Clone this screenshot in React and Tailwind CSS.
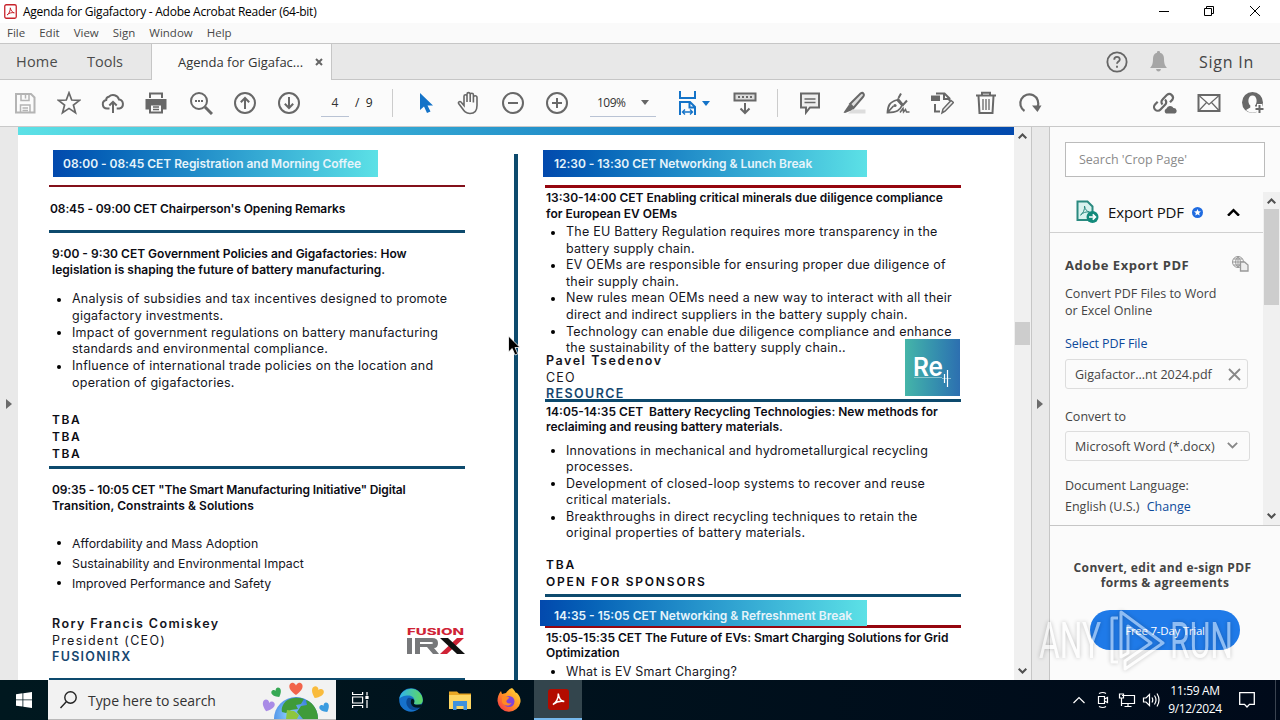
import { clsx } from "clsx";

const Icon = ({ size = 24, className, children }) => (
  <svg
    width={size}
    height={size}
    viewBox="0 0 24 24"
    fill="none"
    stroke="currentColor"
    strokeWidth="2"
    className={clsx("shrink-0", className)}
  >
    {children}
  </svg>
);

const SaveIcon = () => (
  <Icon className="text-[#b4b4b4]">
    <path d="M3 3h15l3.5 3.5v15H3z" />
    <path d="M8 3v6.5h8V3M12.500 4v3.500M7.500 21v-7h9.500v7M9.500 17h5.500M9.500 19.500h5.500" strokeWidth="1.5" />
  </Icon>
);

const StarIcon = () => (
  <Icon>
    <path d="M12 1.800l2.700 7.200 7.800.3-6.100 4.800 2.100 7.600L12 17.400l-6.500 4.300 2.100-7.600L1.500 9.300l7.800-.3z" strokeWidth="1.7" />
  </Icon>
);

const CloudUpIcon = () => (
  <Icon>
    <path d="M8.500 17.500H6a4.300 4.300 0 0 1-.8-8.500 3.200 3.200 0 0 1 2.600-3.300A6.200 6.200 0 0 1 18 8.500a4.600 4.600 0 0 1 .5 9h-2.800" />
    <path d="M12 22V11M8.300 14.500L12 10.800l3.700 3.700" />
  </Icon>
);

const PrinterIcon = () => (
  <Icon className="mr-[2px]">
    <path d="M6 7V2.500h12V7" />
    <path d="M1.500 8h21v10.500H19V14H5v4.500H1.500z" fill="currentColor" stroke="none" />
    <path d="M6 13.500v8h12v-8z" fill="#fbfbfb" />
    <path d="M9 16h6M9 18.500h6" strokeWidth="1.3" />
  </Icon>
);

const SearchDotsIcon = () => (
  <Icon>
    <circle cx="10" cy="10" r="8" />
    <path d="M16 16l7 7" strokeWidth="3" />
    <path d="M6 10h2M9 10h2M12 10h2" />
  </Icon>
);

const CircleIcon = ({ d }) => (
  <Icon>
    <circle cx="12" cy="12" r="10" />
    <path d={d} />
  </Icon>
);

const HandIcon = () => (
  <Icon>
    <path
      d="M7 14.500V5.200a1.500 1.500 0 0 1 3 0V11 3.200a1.500 1.500 0 0 1 3.200 0V11 3.800a1.500 1.500 0 0 1 3.200 0V11.500 6.500a1.600 1.600 0 0 1 3.600 0v8c0 5-2.600 8-7 8-4.500 0-6-2.500-8-5.500l-3.200-4.300c-1-1.500.8-2.900 2.200-1.700z"
      strokeWidth="1.6"
    />
  </Icon>
);

const FitIcon = () => (
  <Icon className="text-[#1473c8]">
    <path d="M4 0v7h15V0" />
    <path d="M4 24V11h10l5 5v8M13.500 11v5.500H19" />
    <path d="M6.500 21h10M9 18.500L6.500 21 9 23.500M14 18.500l2.500 2.500-2.500 2.500" strokeWidth="1.4" />
  </Icon>
);

const KeyboardIcon = () => (
  <Icon>
    <path d="M1.500 2.500h21v7h-21z" fill="#ddd" />
    <path d="M5 6h2M9 6h2M13 6h2M17 6h2" />
    <path d="M12 12v10M7.500 17.500L12 22l4.500-4.500" />
  </Icon>
);

const CommentIcon = () => (
  <Icon>
    <path d="M3 2.500h18v14h-9L8 21.500v-5H3z" fill="#eee" />
    <path d="M6.500 8h11M6.500 11.500h11" strokeWidth="1.4" />
  </Icon>
);

const HighlighterIcon = () => (
  <Icon>
    <path d="M10 18.500h13.500v4H6z" fill="#ddd" stroke="none" />
    <path d="M8 13L18.500 2.500q2-1.300 3 .2t-.6 3.300L11.500 17z" fill="#ddd" />
    <path d="M7 13.500l5 4-3.500 2.300-5.500 2.300-1.500-.6z" fill="currentColor" stroke="none" />
  </Icon>
);

const SignIcon = () => (
  <Icon>
    <path d="M1.500 21.500c.5-7 2-10.500 9.500-12.500l5 5.500c-2 4.500-5 7-14.500 7zl6-6.500" strokeWidth="1.8" />
    <path d="M11.500 7.500l5.500 6.500 4-4.500M12.500 7l2.500-4.500" />
    <circle cx="9" cy="14.500" r="1.600" fill="currentColor" stroke="none" />
    <path d="M14 21.500l3-4 .5 3.500 2-2.500 1 2.500h3" strokeWidth="1.5" />
  </Icon>
);

const EditDocIcon = () => (
  <Icon>
    <path d="M5 13v7.500h5M6 2.500h8.500l5 5V10M14 2.500V8h5" />
    <path d="M1 4.500h9v5.500H1z" fill="currentColor" stroke="none" />
    <path d="M12 22l1-4 8-8.500 2.500 2-8.500 8.700z" strokeWidth="1.500" fill="#eee" />
  </Icon>
);

const TrashIcon = () => (
  <Icon>
    <path d="M2 4.500h20M8 4V1.800h8V4M4.500 5l1 17h13l1-17" />
    <path d="M9 8v11M12 8v11M15 8v11" strokeWidth="1.3" />
  </Icon>
);

const RotateIcon = () => (
  <Icon>
    <path d="M6.500 20A9 9 0 1 1 19.500 16" strokeWidth="2.200" />
    <path d="M14 14.500h9.500L19.500 21z" fill="currentColor" stroke="none" />
  </Icon>
);

const LinkCloudIcon = () => (
  <Icon>
    <path
      d="M9.500 13.500a3.500 3.500 0 0 1 0-5l4.500-4.700a3.700 3.700 0 0 1 5.300 5l-2.300 2.500M12 8.500a3.500 3.500 0 0 1 .3 5L7.500 18.500a3.700 3.700 0 0 1-5.500-5l2.700-2.800"
      strokeWidth="2.2"
    />
    <path d="M13 22.500a2.800 2.800 0 0 1 .5-5 3.900 3.900 0 0 1 7-.5 2.900 2.900 0 0 1 1.500 5.500z" fill="currentColor" stroke="none" />
  </Icon>
);

const MailIcon = () => (
  <Icon>
    <path d="M1.500 4h21v16h-21z" />
    <path d="M2 4.500l10 9 10-9M2 19.500l7.500-8M22 19.500l-7.500-8" strokeWidth="1.2" />
  </Icon>
);

const UserPlusIcon = () => (
  <Icon>
    <circle cx="11.500" cy="11.500" r="10.500" fill="currentColor" stroke="none" />
    <path d="M11.500 4.500c-5 0-5 8-2.200 10v2L5 19c3.500 3.500 9.500 3.500 13 0l-4-2.500v-2c2.500-2 2.500-10-2.500-10z" fill="#fbfbfb" stroke="none" />
    <path d="M18.500 13v10M13.500 18h10" stroke="#fbfbfb" strokeWidth="5" />
    <path d="M18.500 14v8M14.500 18h8" />
  </Icon>
);

const Tool = ({ children }) => (
  <div className="w-11 h-full flex items-center justify-center">{children}</div>
);

const Caret = ({ className }) => (
  <svg width="8" height="5" viewBox="0 0 8 5" className={className}>
    <path d="M0 0h8L4 5z" fill="currentColor" />
  </svg>
);

const AcrobatIcon = () => (
  <svg width="13" height="15" viewBox="0 0 13 15">
    <rect x=".75" y=".75" width="11.500" height="13.500" rx="1.500" fill="#fff" stroke="#c8232c" strokeWidth="1.3" />
    <path d="M3 11c2-1 3.500-4.500 3.300-7.200C7 7 8.500 8.500 10.300 8.800 7.500 8.300 5 9 3 11z" fill="none" stroke="#c8232c" />
  </svg>
);

const TitleBar = () => (
  <div className="h-[23px] bg-white flex items-center pl-[4px] pr-[18px] shrink-0">
    <AcrobatIcon />
    <span className="ml-[6px] text-[12px] tracking-[-0.25px] text-black">
      Agenda for Gigafactory - Adobe Acrobat Reader (64-bit)
    </span>
    <svg width="103" height="12" viewBox="0 0 103 12" className="ml-auto -mt-[2px]" fill="none" stroke="#000">
      <path d="M0 6.500h10" />
      <path d="M45.500 3.500h7v7h-7zM47.500 3V1.500h7v7H53" />
      <path d="M91 1l10 10M101 1L91 11" />
    </svg>
  </div>
);

const MenuBar = () => (
  <div className="h-[20px] bg-[#fafafa] flex items-center pl-[7px] gap-[14px] text-[11.5px] text-[#484848] shrink-0">
    <span>File</span>
    <span>Edit</span>
    <span>View</span>
    <span>Sign</span>
    <span>Window</span>
    <span>Help</span>
  </div>
);

const TabBar = () => (
  <div className="h-[37px] bg-[#e8e8e8] border-y border-[#c6c6c6] flex items-stretch shrink-0 text-[#4b4b4b]">
    <span className="w-[71px] pl-4 flex items-center text-[14.5px] tracking-[0.2px]">Home</span>
    <span className="w-[80px] pl-4 flex items-center text-[14.5px]">Tools</span>
    <div className="w-[181px] h-9 bg-[#fbfbfb] border-x border-[#c6c6c6] pl-[26px] pt-px flex items-center text-[13px] text-[#333]">
      Agenda for Gigafac...
      <svg width="8" height="8" viewBox="0 0 8 8" className="ml-auto mr-2 -mt-px">
        <path d="M1 1l6 6M7 1L1 7" stroke="#666" strokeWidth="2" />
      </svg>
    </div>
    <div className="ml-auto flex items-center pr-6 text-[#666]">
      <Icon size={22}>
        <circle cx="12" cy="12" r="10.500" />
        <path d="M9 9.500c0-4 6-4 6-.3 0 2.300-3 2.300-3 4.800M12 16v2.200" />
      </Icon>
      <svg width="17" height="21" viewBox="0 0 17 21" className="ml-[22px]" fill="#a6a6a6">
        <path d="M8.500 0a1.500 1.500 0 0 1 1.500 1.800c3 .8 4 3 4 6 0 5 1 7.200 3 9.200H0c2-2 3-4.200 3-9.200 0-3 1-5.200 4-6A1.500 1.500 0 0 1 8.500 0zM6 18h5q-.5 2.500-2.500 2.500T6 18z" />
      </svg>
      <span className="ml-8 w-[57px] text-[16px] tracking-[0.75px] text-[#444]">Sign In</span>
    </div>
  </div>
);

const Toolbar = () => (
  <div className="h-[47px] bg-[#fbfbfb] border-b border-[#c9c9c9] flex items-center pl-[3px] shrink-0 text-[#686868]">
    <Tool><SaveIcon /></Tool>
    <Tool><StarIcon /></Tool>
    <Tool><CloudUpIcon /></Tool>
    <Tool><PrinterIcon /></Tool>
    <Tool><SearchDotsIcon /></Tool>
    <Tool><CircleIcon d="M12 18V7M7.800 11.200L12 7l4.200 4.200" /></Tool>
    <Tool><CircleIcon d="M12 6v11M7.800 12.800L12 17l4.200-4.200" /></Tool>
    <span className="ml-[10px] w-7 h-[27px] border-b border-[#b9c3d4] text-center text-[12px] leading-[26px] text-[#333]">4</span>
    <span className="ml-[6px] w-[37px] text-[12px] text-[#222] whitespace-pre">/  9</span>
    <div className="w-px h-7 bg-[#ccc]" />
    <div className="w-[10px]" />
    <Tool>
      <svg width="13" height="20" viewBox="0 0 13 20" fill="#1473c8" className="ml-[3px]">
        <path d="M0 0v17l4-3.500 3 6.500 3.500-1.500-3-6H13z" />
      </svg>
    </Tool>
    <Tool><HandIcon /></Tool>
    <Tool><CircleIcon d="M7 12h10" /></Tool>
    <Tool><CircleIcon d="M7 12h10M12 7v10" /></Tool>
    <div className="ml-[11px] w-[66px] h-[27px] border-b border-[#b9c3d4] pl-[7px] pr-[7px] flex items-center justify-between text-[12px] tracking-[-0.5px] text-[#333]">
      109%
      <Caret className="text-[#666]" />
    </div>
    <div className="ml-[20px] w-[34px] flex items-center">
      <FitIcon />
      <Caret className="text-[#1473c8] ml-[2px]" />
    </div>
    <div className="ml-[13px] w-11 flex justify-center"><KeyboardIcon /></div>
    <div className="ml-[10px] w-px h-7 bg-[#ccc]" />
    <div className="w-[10px]" />
    <Tool><CommentIcon /></Tool>
    <Tool><HighlighterIcon /></Tool>
    <Tool><SignIcon /></Tool>
    <Tool><EditDocIcon /></Tool>
    <Tool><TrashIcon /></Tool>
    <Tool><RotateIcon /></Tool>
    <div className="ml-auto pr-[5px] flex h-full">
      <Tool><LinkCloudIcon /></Tool>
      <Tool><MailIcon /></Tool>
      <Tool><UserPlusIcon /></Tool>
    </div>
  </div>
);

const Banner = ({ className, children }) => (
  <div
    className={clsx(
      "bg-linear-to-r from-[#0349ad] to-[#5ce1e6] flex items-center text-[12px] font-semibold text-[#e6f4fb] whitespace-nowrap shrink-0",
      className
    )}
  >
    {children}
  </div>
);

const Rule = ({ className }) => <div className={clsx("w-[416px] shrink-0", className)} />;

const Heading = ({ lines, className }) => (
  <div className={clsx("text-[12px] font-semibold text-[#0c0c14] whitespace-nowrap shrink-0", className)}>
    {lines.map((line, i) => (
      <p key={i} className="whitespace-pre">{line}</p>
    ))}
  </div>
);

const Bullets = ({ items, className }) => (
  <ul className={clsx("text-[#15151d] whitespace-nowrap shrink-0", className)}>
    {items.map((lines, i) => (
      <li key={i} className="flex">
        <span className="w-5 pl-[5px] pt-[0.45em] shrink-0">
          <span className="block size-[4px] mt-px rounded-full bg-black" />
        </span>
        <div>
          {lines.map((line, j) => (
            <p key={j}>{line}</p>
          ))}
        </div>
      </li>
    ))}
  </ul>
);

const FusionLogo = () => (
  <svg width="59" height="28" viewBox="0 0 59 28" className="shrink-0 overflow-visible">
    <text x="1" y="7.500" fontFamily="Inter, sans-serif" fontWeight="800" fontSize="9" textLength="57" lengthAdjust="spacingAndGlyphs" fill="#cf2336">
      FUSION
    </text>
    <path d="M1 11h5v16H1zM9 11h17q6 0 6 5t-4 5l5 6h-6l-6-7h-7v-3h11q2 0 2-1t-2-1H14v12H9z" fill="#77787a" />
    <path d="M51 11h7L41 27h-7z" fill="#cf2336" />
    <path d="M34 11h8l17 16h-8z" fill="#111" />
  </svg>
);

const ResourceLogo = () => (
  <div className="w-[55px] h-[57px] bg-linear-to-r from-[#45b5a8] to-[#2d6fb0] shrink-0">
    <svg width="55" height="57" viewBox="0 0 55 57" className="overflow-visible">
      <text x="8" y="37" fontFamily="Inter, sans-serif" fontWeight="600" fontSize="26" textLength="30" lengthAdjust="spacingAndGlyphs" fill="#fff">
        Re
      </text>
      <path d="M9 38.500h28M37 39.500h9" stroke="#bfe3e6" strokeWidth=".6" />
      <path d="M39.500 35v9M42.500 31v17" stroke="#fff" strokeWidth="1.2" />
    </svg>
  </div>
);

const LeftColumn = () => (
  <div className="w-[416px] flex flex-col">
    <Banner className="mt-[15px] ml-1 w-[325px] h-[27px] pl-[10px] pt-px tracking-[-0.04px]">
      08:00 - 08:45 CET Registration and Morning Coffee
    </Banner>
    <Rule className="mt-2 h-[2px] bg-[#83101a]" />
    <Heading className="mt-[14px] ml-px leading-4 tracking-[-0.1px]" lines={["08:45 - 09:00 CET Chairperson's Opening Remarks"]} />
    <Rule className="mt-[13px] h-[3px] bg-[#0d4a6d]" />
    <Heading
      className="mt-[13px] ml-[3px] leading-4"
      lines={["9:00 - 9:30 CET Government Policies and Gigafactories: How", "legislation is shaping the future of battery manufacturing."]}
    />
    <Bullets
      className="mt-[13px] ml-[3px] h-[100px] pt-[0.4px] text-[12.5px] leading-[16.67px] tracking-[0.24px]"
      items={[
        ["Analysis of subsidies and tax incentives designed to promote", "gigafactory investments."],
        ["Impact of government regulations on battery manufacturing", "standards and environmental compliance."],
        ["Influence of international trade policies on the location and", "operation of gigafactories."],
      ]}
    />
    <Heading className="mt-[20px] ml-[3px] h-[51px] leading-[17px] tracking-[1.6px]" lines={["TBA", "TBA", "TBA"]} />
    <Rule className="mt-1 h-[3px] bg-[#0d4a6d]" />
    <Heading
      className="mt-[13px] ml-[3px] leading-4 tracking-[-0.13px]"
      lines={['09:35 - 10:05 CET "The Smart Manufacturing Initiative" Digital']}
    />
    <Heading className="ml-[3px] leading-4 tracking-[0.06px]" lines={["Transition, Constraints & Solutions"]} />
    <Bullets
      className="mt-5 ml-[3px] h-[60px] text-[12.3px] leading-5"
      items={[["Affordability and Mass Adoption"], ["Sustainability and Environmental Impact"], ["Improved Performance and Safety"]]}
    />
    <div className="mt-[22px] ml-[3px] h-[50px] flex items-center justify-between text-[12.5px] leading-[16.5px] text-[#15151d]">
      <div>
        <p className="font-semibold tracking-[1.4px]">Rory Francis Comiskey</p>
        <p className="tracking-[1.3px]">President (CEO)</p>
        <p className="font-semibold tracking-[1.3px] text-[#17476f]">FUSIONIRX</p>
      </div>
      <FusionLogo />
    </div>
    <Rule className="mt-[12px] h-[3px] bg-[#0d4a6d]" />
  </div>
);

const RightColumn = () => (
  <div className="w-[416px] flex flex-col">
    <Banner className="mt-[15px] -ml-[2px] w-[324px] h-[27px] pl-[11px] pt-px tracking-[-0.03px]">
      12:30 - 13:30 CET Networking & Lunch Break
    </Banner>
    <Rule className="mt-2 h-[3px] bg-[#95060f]" />
    <Heading
      className="mt-[2px] ml-px leading-4"
      lines={["13:30-14:00 CET Enabling critical minerals due diligence compliance", "for European EV OEMs"]}
    />
    <Bullets
      className="mt-[2px] ml-px h-[133px] text-[12.5px] leading-[16.6px] tracking-[0.24px]"
      items={[
        ["The EU Battery Regulation requires more transparency in the", "battery supply chain."],
        ["EV OEMs are responsible for ensuring proper due diligence of", "their supply chain."],
        ["New rules mean OEMs need a new way to interact with all their", "direct and indirect suppliers in the battery supply chain."],
        ["Technology can enable due diligence compliance and enhance", "the sustainability of the battery supply chain.."],
      ]}
    />
    <div className="-mt-[18px] ml-px h-[60px] flex items-end justify-between text-[12.5px] leading-[16.5px] text-[#15151d]">
      <div className="h-[46px]">
        <p className="font-semibold tracking-[1.55px]">Pavel Tsedenov</p>
        <p className="tracking-[1.2px]">CEO</p>
        <p className="font-semibold tracking-[1.4px] text-[#17476f]">RESOURCE</p>
      </div>
      <div className="pb-[3px] pr-[1.5px]">
        <ResourceLogo />
      </div>
    </div>
    <Rule className="h-[3px] bg-[#0d4a6d]" />
    <Heading
      className="mt-[2px] ml-px h-[31px] leading-[15.2px]"
      lines={["14:05-14:35 CET  Battery Recycling Technologies: New methods for", "reclaiming and reusing battery materials."]}
    />
    <Bullets
      className="mt-[7px] ml-px h-[100px] pt-[0.5px] text-[12.5px] leading-[16.6px] tracking-[0.24px]"
      items={[
        ["Innovations in mechanical and hydrometallurgical recycling", "processes."],
        ["Development of closed-loop systems to recover and reuse", "critical materials."],
        ["Breakthroughs in direct recycling techniques to retain the", "original properties of battery materials."],
      ]}
    />
    <Heading className="mt-[14px] ml-px leading-[17px] tracking-[1.8px]" lines={["TBA", "OPEN FOR SPONSORS"]} />
    <Rule className="mt-1 h-[3px] bg-[#0d4a6d]" />
    <Banner className="relative mt-[3px] -ml-[5px] w-[327px] h-[26px] pl-[14px] pt-[6px]">
      14:35 - 15:05 CET Networking & Refreshment Break
    </Banner>
    <Rule className="-mt-px h-[3px] bg-[#95060f]" />
    <Heading
      className="mt-[2px] ml-px h-[31px] leading-[15.2px] tracking-[-0.02px]"
      lines={["15:05-15:35 CET The Future of EVs: Smart Charging Solutions for Grid", "Optimization"]}
    />
    <Bullets className="mt-[2px] ml-px pt-[0.5px] text-[12.5px] leading-[16.6px] tracking-[0.2px]" items={[["What is EV Smart Charging?"]]} />
  </div>
);

const Chevron = ({ up, size = 9, width = 2, className }) => (
  <svg width={size} height={size * 0.67} viewBox="0 0 9 6" className={className} fill="none" stroke="currentColor" strokeWidth={width}>
    <path d={up ? "M.7 5.300L4.500 1.500l3.800 3.800" : "M.7.700l3.800 3.800L8.300.700"} />
  </svg>
);

const Handle = () => (
  <svg width="6" height="10" viewBox="0 0 6 10" className="mr-px">
    <path d="M0 0l6 5-6 5z" fill="#6b6b6b" />
  </svg>
);

const Document = () => (
  <div className="flex-1 flex">
    <div className="w-[18px] bg-[#e9e9e9] flex items-center justify-center">
      <Handle />
    </div>
    <div className="w-[996px] h-full bg-white overflow-hidden font-[Inter,sans-serif]">
      <div className="h-2 bg-linear-to-r from-[#5ce1e6] to-[#0349ad]" />
      <div className="flex pl-[31px]">
        <LeftColumn />
        <div className="mt-[19px] ml-[49px] mr-[27px] w-[4px] bg-[#0d4a6d]" />
        <RightColumn />
      </div>
    </div>
    <div className="w-[17px] bg-[#f0f0f0] flex flex-col items-center py-[6px] text-[#505050]">
      <Chevron up />
      <div className="mt-[183px] w-[15px] h-[23px] bg-[#cdcdcd]" />
      <Chevron className="mt-auto" />
    </div>
    <div className="w-[19px] bg-[#e9e9e9] border-x border-[#c6c6c6] flex items-center justify-center">
      <Handle />
    </div>
  </div>
);

const ExportIcon = () => (
  <svg width="23" height="24" viewBox="0 0 23 24" fill="none">
    <path d="M1.500 1.500h10l5 5V20h-15z" fill="#d9f3ef" stroke="#2b8a80" strokeWidth="2" />
    <path d="M4.500 15c2.500-1.500 4.500-5.500 4-9 .8 4 2.500 5.500 5 6-3.500-.5-6.500.5-9 3z" stroke="#2b8a80" />
    <circle cx="16.500" cy="17" r="6" fill="#138a7b" />
    <path d="M13 17h6M16.700 14.300l2.700 2.700-2.700 2.700" stroke="#fff" strokeWidth="1.7" />
  </svg>
);

const SidePanel = () => (
  <div className="w-[230px] bg-[#fbfbfb] flex flex-col text-[#444]">
    <div className="h-[65px] pt-[15px] pl-[15px] shrink-0">
      <div className="w-[200px] h-[35px] bg-white border border-[#bbb] pl-[13px] pt-[2px] flex items-center text-[12.5px] text-[#8a8a8a]">
        Search 'Crop Page'
      </div>
    </div>
    <div className="h-[334px] flex shrink-0 border-b border-[#c6c6c6]">
      <div className="w-[213px]">
        <div className="h-[41px] border-b border-[#d0d0d0] flex items-center pl-[26px] text-[15px] text-[#111]">
          <ExportIcon />
          <span className="ml-[9px] tracking-[-0.15px]">Export PDF</span>
          <svg width="11" height="11" viewBox="0 0 11 11" className="ml-2">
            <circle cx="5.500" cy="5.500" r="5.500" fill="#1f6be0" />
            <path d="M5.500 2l1 2.300 2.500.2-1.900 1.600.6 2.500-2.200-1.300-2.200 1.300.6-2.500L2 4.500l2.500-.2z" fill="#fff" />
          </svg>
          <Chevron up size={13} width={1.7} className="ml-[24px] text-black" />
        </div>
        <div className="pl-[15px] pt-[23px] text-[12.5px]">
          <div className="flex items-center h-5 mb-[9px]">
            <b className="text-[13px] tracking-[0.55px]">Adobe Export PDF</b>
            <svg width="17" height="16" viewBox="0 0 17 16" className="ml-auto mr-[14px] -mt-1" fill="none" stroke="#999">
              <circle cx="6" cy="6" r="5.500" />
              <path d="M.5 6h11M6 .500v11M1.500 3h9M1.500 9h9M6 .500q-5 5.500 0 11M6 .500q5 5.500 0 11" />
              <path d="M8.500 6h4l3.500 3v6H8.500z" fill="#eee" strokeWidth="1.3" />
            </svg>
          </div>
          <p className="leading-[17px]">Convert PDF Files to Word</p>
          <p className="leading-[17px]">or Excel Online</p>
          <p className="mt-4 leading-[17px] text-[#0d4a9b] tracking-[-0.1px]">Select PDF File</p>
          <div className="mt-[7px] w-[183px] h-[30px] border border-[#ddd] rounded-[3px] flex items-center pl-[9px] pr-[6px] justify-between">
            <span className="pt-[2px]">Gigafactor...nt 2024.pdf</span>
            <svg width="13" height="13" viewBox="0 0 13 13">
              <path d="M1 1l11 11M12 1L1 12" stroke="#888" strokeWidth="1.8" />
            </svg>
          </div>
          <p className="mt-[19px] leading-[17px]">Convert to</p>
          <div className="mt-[6px] w-[185px] h-[30px] border border-[#ddd] rounded-[3px] flex items-center pl-[9px] pr-[11px] justify-between">
            <span className="pt-[3px] tracking-[0.04px]">Microsoft Word (*.docx)</span>
            <Chevron size={11} width={1.5} className="text-[#888]" />
          </div>
          <p className="mt-4 leading-[17px]">Document Language:</p>
          <p className="mt-1 leading-[17px]">
            English (U.S.) <span className="ml-1 text-[#0d4a9b]">Change</span>
          </p>
        </div>
      </div>
      <div className="w-[17px] bg-[#f0f0f0] flex flex-col items-center py-[6px] text-[#505050]">
        <Chevron up />
        <div className="mt-[5px] w-[15px] h-[96px] bg-[#cdcdcd]" />
        <Chevron className="mt-auto" />
      </div>
    </div>
    <div className="pt-[34px] flex flex-col items-center text-[12px] leading-[15px] tracking-[0.35px] font-bold">
      <p className="pr-[5px]">Convert, edit and e-sign PDF</p>
      <p>forms & agreements</p>
      <div className="mt-5 w-[150px] h-10 rounded-full bg-[#1f7ae8] flex items-center justify-center text-[11.5px] tracking-[-0.25px] font-normal text-white">
        Free 7-Day Trial
      </div>
    </div>
  </div>
);

const Watermark = () => (
  <svg
    width="200"
    height="66"
    viewBox="0 0 200 66"
    className="absolute left-[1036px] top-[608px] overflow-visible opacity-50 drop-shadow-[0_0_2px_rgba(0,0,0,0.45)]"
  >
    <g fill="#fff" fontFamily="Roboto, sans-serif" fontSize="50">
      <text x="3" y="50" textLength="62" lengthAdjust="spacingAndGlyphs">ANY</text>
      <text x="134" y="50" textLength="63" lengthAdjust="spacingAndGlyphs">RUN</text>
    </g>
    <path d="M82 10h-6v44h6M85 4l42 31-38 26v-8l26-18-23-17v27l-7 4z" fill="none" stroke="#fff" strokeWidth="3" strokeLinejoin="round" />
  </svg>
);

const Heart = ({ x, y, fill, rotate, scale = 1 }) => (
  <path d="M0 5C-9-1-5-6-2-5q1.500.5 2 2 .5-1.500 2-2c3-1 7 4-2 10z" fill={fill} transform={`translate(${x} ${y}) rotate(${rotate}) scale(${scale})`} />
);

const EarthArt = () => (
  <svg width="76" height="38" viewBox="0 0 76 38" className="ml-auto self-end">
    <defs>
      <radialGradient id="sea" cx=".35" cy=".4">
        <stop offset="0" stopColor="#8fd0ff" />
        <stop offset="1" stopColor="#3b7fe0" />
      </radialGradient>
    </defs>
    <circle cx="36" cy="38" r="22" fill="url(#sea)" />
    <path d="M26 20c6-4 12-4 18-2l-3 5-5 1 2 4-7 1-5 3-4-1c-1-4 1-8 4-11zM46 19c8 3 12 11 12 19H43l-6-7 4-6 6-1z" fill="#3f9b3a" />
    <path d="M27 29l7 1 5 4-2 4H26z" fill="#8ec63f" />
    <Heart x={36} y={8} fill="#f2644b" rotate={0} scale={1.2} />
    <Heart x={17} y={12} fill="#36a853" rotate={-30} scale={0.9} />
    <Heart x={57} y={12} fill="#f9bb3c" rotate={25} scale={1.1} />
    <Heart x={8} y={25} fill="#a98be6" rotate={20} scale={1.1} />
    <Heart x={65} y={27} fill="#3a9be0" rotate={-30} scale={0.9} />
  </svg>
);

const EdgeIcon = () => (
  <svg width="24" height="24" viewBox="0 0 24 24" className="mr-[2px]">
    <defs>
      <linearGradient id="edgeTop" x1="0" x2="1">
        <stop offset="0" stopColor="#2fb4ee" />
        <stop offset="1" stopColor="#5fd860" />
      </linearGradient>
    </defs>
    <circle cx="12" cy="12" r="11.800" fill="#1672cb" />
    <path d="M.3 11A11.800 11.800 0 0 1 23.800 12c0 4.500-4.500 5.500-8 4.300-2-.8-1-1.500-.5-3C16 10 13 7.500 9.500 7.500 5 7.500 1.500 9 .3 11z" fill="url(#edgeTop)" />
    <path d="M9 10c-3 3-2 9 3 11.500 4 1.500 8 0 9.800-3-4 2-9 .5-10-3.500-.6-2 .3-3.500 1-4.500-1.300-1-2.700-1-3.800-.5z" fill="#0c4a94" />
    <path d="M12.800 10.500c1.800.8 3.200 1.600 2.500 3.800-.5 1.500-.5 2 1.500 2.500l7-.5-2 3c-4 1.500-9 0-10-4-.4-2 .3-3.800 1-4.800z" fill="#00181f" />
  </svg>
);

const FolderIcon = () => (
  <svg width="22" height="20" viewBox="0 0 22 20" className="mr-[2px]">
    <path d="M0 1.500h8l2 2h12V19H0z" fill="#e9a825" />
    <path d="M0 5h22v14H0z" fill="#fdd663" />
    <path d="M4 11h14v9h-3.500v-4h-7v4H4z" fill="#3f91dc" />
  </svg>
);

const FirefoxIcon = () => (
  <svg width="24" height="24" viewBox="0 0 24 24" className="mr-[2px]">
    <defs>
      <linearGradient id="fox" x1="1" y1="0" x2="0" y2="1">
        <stop offset="0" stopColor="#ffe23c" />
        <stop offset=".5" stopColor="#ff9225" />
        <stop offset="1" stopColor="#f5264f" />
      </linearGradient>
    </defs>
    <path d="M15 0c2 2 3 3 3.500 4.500L20 5c3 3 3.800 6 3.500 9A11.600 11.600 0 0 1 .5 13C.5 9 1.500 6 4 3l1 3 4-1c1-2 3-4 6-5z" fill="url(#fox)" />
    <circle cx="12" cy="13.500" r="5.500" fill="#8044d8" />
    <path d="M5 9c3-1.500 5 0 7.500.5L10 12c-2 2 1 4.500 4.500 3-2 4-8.500 3-9.500-1z" fill="#ff8a24" />
  </svg>
);

const TaskButton = ({ active, children }) => (
  <div
    className={clsx(
      "h-full flex items-center justify-center",
      active ? "w-12 bg-[#33454d] border-b-2 border-[#76b9ed]" : "w-[49px]"
    )}
  >
    {children}
  </div>
);

const Taskbar = () => (
  <div className="h-10 bg-linear-to-r from-[#00181f] to-[#000a1a] flex items-center shrink-0 text-white">
    <div className="w-12 flex justify-center">
      <svg width="16" height="16" viewBox="0 0 16 16" fill="#fff">
        <path d="M0 2.300l6.500-1v6.200H0zM7.300 1.200L16 0v7.500H7.300zM0 8.300h6.500v6.300L0 13.700zM7.300 8.300H16V16l-8.700-1.200z" />
      </svg>
    </div>
    <div className="w-[288px] h-full bg-[#f2f2f2] border-b border-[#b9b9b9] flex items-center pl-[12px] text-[#333]">
      <svg width="17" height="18" viewBox="0 0 17 18" fill="none" stroke="#222" strokeWidth="1.4">
        <circle cx="10.500" cy="6.500" r="5.700" />
        <path d="M6.500 10.500L.5 17" />
      </svg>
      <span className="ml-[11px] pt-px text-[14px] tracking-[-0.05px]">Type here to search</span>
      <EarthArt />
    </div>
    <TaskButton>
      <svg width="17" height="16" viewBox="0 0 17 16" fill="none" stroke="#fff" strokeWidth="1.2">
        <path d="M.6 0v2.500h10V0M.6 5h10v6H.6zM.6 16v-2.500h10V16M15 0v3.500M15 8v8" />
        <path d="M14 4.500h2v2h-2z" fill="#fff" />
      </svg>
    </TaskButton>
    <div className="w-[2px]" />
    <TaskButton><EdgeIcon /></TaskButton>
    <TaskButton><FolderIcon /></TaskButton>
    <TaskButton><FirefoxIcon /></TaskButton>
    <TaskButton active>
      <svg width="21" height="21" viewBox="0 0 21 21">
        <rect width="21" height="21" rx="3" fill="#b30b00" />
        <path d="M5 15.500c3-1.500 5.700-6.500 5.300-11 .5 5 3 7.500 6 8-4-.8-8 .3-11.300 3z" fill="none" stroke="#fff" strokeWidth="1.5" />
      </svg>
    </TaskButton>
    <div className="ml-auto h-full flex items-center">
      <svg width="88" height="18" viewBox="0 0 88 18" fill="none" stroke="#fff" strokeWidth="1.2">
        <path d="M.5 12L6 6.500l5.500 5.500" />
        <path d="M25.500 5.500h6v7h-6zM31.500 8l3-1.500v5l-3-1.500M26 2.500q4-2 7 0M26 15.500q4 2 7 0" />
        <path d="M49 4.500h12.500v8H49M55 12.500v3M51.500 15.500h7M46.500 3h4v4h-4zM48.500 7v8" />
        <path d="M70.500 7h2.500l3.500-3.500v11L73 11h-2.500zM79 6.500q1.500 2.500 0 5M81.500 4.500q3 4.500 0 9M84 2.500q4 6.500 0 13" />
      </svg>
      <div className="ml-[7px] mr-px w-[54px] text-center text-[12px] leading-[18px] tracking-[-0.35px] whitespace-nowrap">
        <p>11:59 AM</p>
        <p>9/12/2024</p>
      </div>
      <svg width="16" height="16" viewBox="0 0 16 16" className="ml-[16px]" fill="none" stroke="#fff" strokeWidth="1.3">
        <path d="M.7.700h14.600v11.600h-4.800L8 15l-2.500-2.700H.7z" />
      </svg>
      <div className="ml-5 mr-1 w-px h-full bg-[#3a4350]" />
    </div>
  </div>
);

const Cursor = () => (
  <svg width="13" height="21" viewBox="0 0 13 21" className="absolute left-[508px] top-[335px]">
    <path d="M.5 1v16l3.700-3.500L7 20l2.800-1.200L7 12.500h5z" fill="#000" stroke="#fff" strokeWidth=".8" />
  </svg>
);

export default function App() {
  return (
    <div className="relative w-[1280px] h-[720px] overflow-hidden flex flex-col bg-white whitespace-nowrap font-['Open_Sans','Noto_Sans',sans-serif]">
      <TitleBar />
      <MenuBar />
      <TabBar />
      <Toolbar />
      <div className="flex h-[553px] overflow-hidden">
        <Document />
        <SidePanel />
      </div>
      <Taskbar />
      <Watermark />
      <Cursor />
    </div>
  );
}
